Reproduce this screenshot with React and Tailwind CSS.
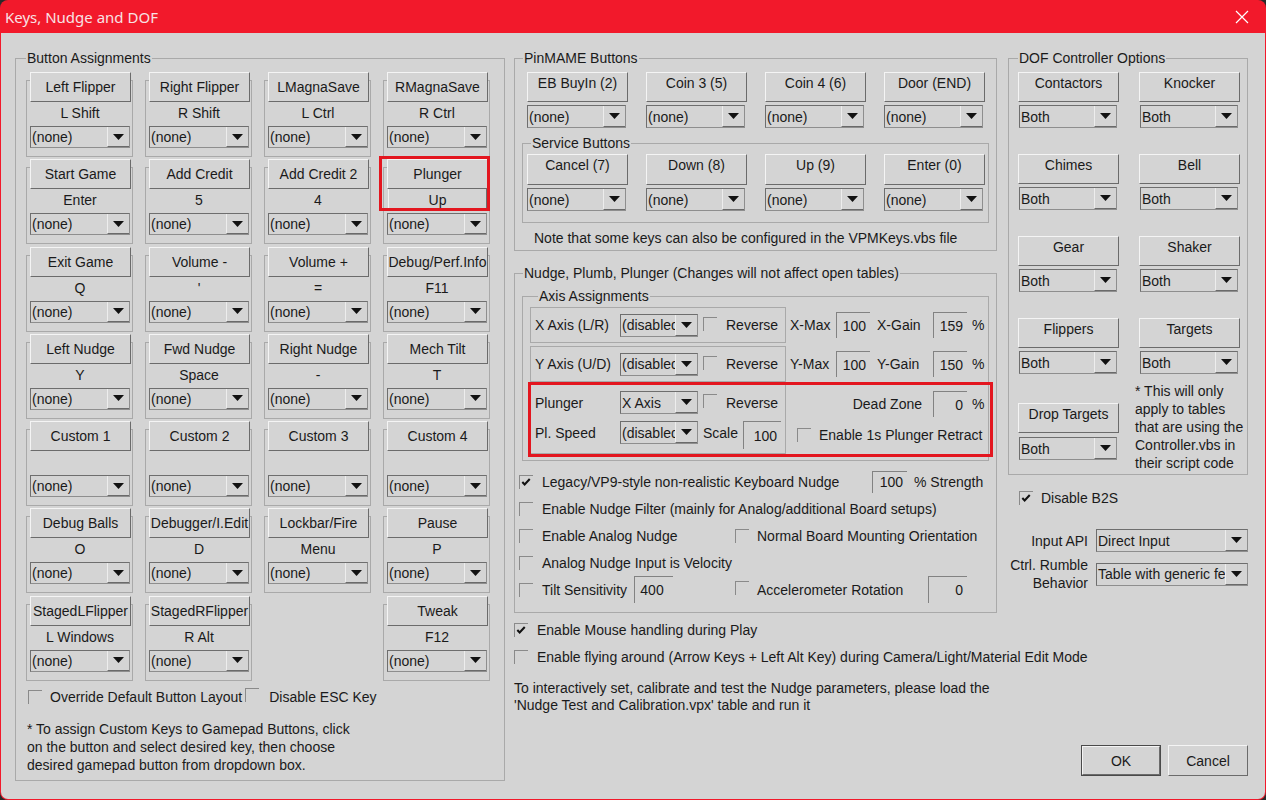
import React from 'react'

const keyRows = [
  [['Left Flipper', 'L Shift'], ['Right Flipper', 'R Shift'], ['LMagnaSave', 'L Ctrl'], ['RMagnaSave', 'R Ctrl']],
  [['Start Game', 'Enter'], ['Add Credit', '5'], ['Add Credit 2', '4'], ['Plunger', 'Up', true]],
  [['Exit Game', 'Q'], ['Volume -', "'"], ['Volume +', '='], ['Debug/Perf.Info', 'F11']],
  [['Left Nudge', 'Y'], ['Fwd Nudge', 'Space'], ['Right Nudge', '-'], ['Mech Tilt', 'T']],
  [['Custom 1', ''], ['Custom 2', ''], ['Custom 3', ''], ['Custom 4', '']],
  [['Debug Balls', 'O'], ['Debugger/I.Edit', 'D'], ['Lockbar/Fire', 'Menu'], ['Pause', 'P']],
  [['StagedLFlipper', 'L Windows'], ['StagedRFlipper', 'R Alt'], null, ['Tweak', 'F12']],
]

const pinButtons = ['EB BuyIn (2)', 'Coin 3 (5)', 'Coin 4 (6)', 'Door (END)']
const serviceButtons = ['Cancel (7)', 'Down (8)', 'Up (9)', 'Enter (0)']
const dofRows = [
  ['Contactors', 'Knocker'],
  ['Chimes', 'Bell'],
  ['Gear', 'Shaker'],
  ['Flippers', 'Targets'],
]

// raised push button
function Btn({ children, className = '', top = false }) {
  return (
    <div
      className={`flex ${top ? 'items-start pt-[2px]' : 'items-center'} [justify-content:safe_center] overflow-hidden whitespace-nowrap bg-[#d4d4d4] border border-t-[#f4f4f4] border-l-[#f4f4f4] border-r-[#6b6b6b] border-b-[#6b6b6b] ${className}`}
    >
      {children}
    </div>
  )
}

// drop down list with the little arrow button
function Combo({ value = '(none)', className = '' }) {
  return (
    <div className={`flex border border-[#8e8e8e] border-t-[#6e6e6e] border-l-[#6e6e6e] ${className}`}>
      <span className="flex-1 min-w-0 overflow-hidden whitespace-nowrap pl-[1px] flex items-center">{value}</span>
      <span className="w-[22px] shrink-0 flex items-center justify-center border-l border-l-[#ededed] border-b border-b-[#6a6a6a]">
        <svg width="11" height="6" viewBox="0 0 11 6">
          <path d="M0 0H11L5.5 6Z" fill="#111" />
        </svg>
      </span>
    </div>
  )
}

function Edit({ value, className = '' }) {
  return (
    <div className={`flex items-center justify-end pr-[4px] shrink-0 border-t border-l border-[#828282] ${className}`}>
      {value}
    </div>
  )
}

function Check({ on }) {
  return (
    <span className="relative inline-block w-[14px] h-[14px] shrink-0 border-t border-l border-[#8a8a8a]">
      {on && (
        <svg viewBox="0 0 14 14" className="absolute left-0 top-0 w-[13px] h-[13px]">
          <path d="M2.5 6.5L5 9.2L10.5 3.2" stroke="#111" strokeWidth="2.2" fill="none" />
        </svg>
      )}
    </span>
  )
}

function KeyCell({ cell }) {
  if (!cell) return <div />
  const [label, keyName, marked] = cell
  return (
    <div className="relative flex flex-col h-[85px]">
      <Btn className="relative z-10 ml-[4px] mr-[2px] h-[30px]">{label}</Btn>
      <div className="-mt-[22px] flex-1 border border-[#a9a9a9] pt-[21px] pl-[3px] pr-[2px]">
        <div
          className={`h-[22px] flex items-center justify-center ${
            marked ? 'ml-[1px] border-l border-l-[#f2f2f2] border-r border-b border-r-[#6b6b6b] border-b-[#6b6b6b]' : ''
          }`}
        >
          {keyName}
        </div>
        <Combo className="mt-[2px] h-[22px]" />
      </div>
      {marked && (
        <div className="absolute left-[-4px] right-[0px] top-[-3px] h-[55px] border-[3px] border-[#e3161f] z-20" />
      )}
    </div>
  )
}

function Legend({ children, className = '' }) {
  return <legend className={`px-[1px] leading-4 ${className}`}>{children}</legend>
}

function ButtonAssignments() {
  return (
    <fieldset className="w-[490px] border border-[#a9a9a9] pl-[10px] pr-[14px] pt-[6px] pb-[6px]">
      <Legend>Button Assignments</Legend>
      <div className="grid grid-cols-[repeat(4,107px)] gap-x-[12px] gap-y-[2.3px]">
        {keyRows.flat().map((cell, i) => (
          <KeyCell key={i} cell={cell} />
        ))}
      </div>
      <div className="mt-[8px] h-[16px] flex items-center ml-[2px] whitespace-nowrap">
        <Check />
        <span className="ml-[8px]">Override Default Button Layout</span>
        <span className="ml-[3px]">
          <Check />
        </span>
        <span className="ml-[10px]">Disable ESC Key</span>
      </div>
      <p className="mt-[15px] ml-[1px] leading-[18px]">
        * To assign Custom Keys to Gamepad Buttons, click
        <br />
        on the button and select desired key, then choose
        <br />
        desired gamepad button from dropdown box.
      </p>
    </fieldset>
  )
}

function PinMame() {
  return (
    <fieldset className="border border-[#a9a9a9] px-[7px] pt-[6px] pb-[4px]">
      <Legend className="ml-[1px]">PinMAME Buttons</Legend>
      <div className="ml-[5px] grid grid-cols-[repeat(4,101px)] gap-x-[18px]">
        {pinButtons.map((b) => (
          <div key={b}>
            <Btn top className="h-[30px]">{b}</Btn>
            <Combo className="mt-[3px] h-[23px] w-[99px]" />
          </div>
        ))}
      </div>
      <fieldset className="mt-[7px] border border-[#a9a9a9] pt-[3px] pb-[11px]">
        <Legend className="ml-[8px]">Service Buttons</Legend>
        <div className="ml-[4px] grid grid-cols-[repeat(4,101px)] gap-x-[18px]">
          {serviceButtons.map((b) => (
            <div key={b}>
              <Btn top className="h-[31px]">{b}</Btn>
              <Combo className="mt-[3px] h-[23px] w-[99px]" />
            </div>
          ))}
        </div>
      </fieldset>
      <p className="mt-[7px] ml-[12px] leading-4 whitespace-nowrap">
        Note that some keys can also be configured in the VPMKeys.vbs file
      </p>
    </fieldset>
  )
}

function AxisRow({ axis, max, gain, maxLabel, gainLabel, className = '' }) {
  return (
    <div className={`flex h-[36px] ${className}`}>
      <div className="w-[256px] border border-[#a9a9a9] flex items-center pl-[4px]">
        <span className="w-[85px] whitespace-nowrap">{axis}</span>
        <Combo value="(disabled)" className="w-[78px] h-[23px]" />
        <span className="ml-[5px]">
          <Check />
        </span>
        <span className="ml-[9px]">Reverse</span>
      </div>
      <div className="flex items-center pl-[4px] whitespace-nowrap">
        <span className="w-[46px]">{maxLabel}</span>
        <Edit value={max} className="w-[34px] h-[26px]" />
        <span className="ml-[7px] w-[56px]">{gainLabel}</span>
        <Edit value={gain} className="w-[34px] h-[26px]" />
        <span className="ml-[5px]">%</span>
      </div>
    </div>
  )
}

function CheckRow({ on, children, className = '' }) {
  return (
    <div className={`flex items-center h-[27px] whitespace-nowrap ${className}`}>
      <Check on={on} />
      {children}
    </div>
  )
}

function NudgeBox() {
  return (
    <fieldset className="mt-[14px] border border-[#a9a9a9] px-[7px] pt-[7px] pb-[9px]">
      <Legend className="ml-[1px] whitespace-nowrap">Nudge, Plumb, Plunger (Changes will not affect open tables)</Legend>
      <fieldset className="border border-[#a9a9a9] pl-[7px] pt-[3px] pb-[6px]">
        <Legend className="ml-[8px]">Axis Assignments</Legend>
        <AxisRow axis="X Axis (L/R)" maxLabel="X-Max" gainLabel="X-Gain" max="100" gain="159" />
        <AxisRow axis="Y Axis (U/D)" maxLabel="Y-Max" gainLabel="Y-Gain" max="100" gain="150" className="mt-[3px]" />
        <div className="relative flex h-[73px] -mt-[1px]">
          <div className="w-[256px] border border-[#a9a9a9] pl-[4px] pt-[9px]">
            <div className="flex items-center h-[23px]">
              <span className="w-[85px]">Plunger</span>
              <Combo value="X Axis" className="w-[78px] h-[23px]" />
              <span className="ml-[5px]">
                <Check />
              </span>
              <span className="ml-[9px]">Reverse</span>
            </div>
            <div className="flex items-start mt-[7px]">
              <span className="w-[85px] h-[23px] flex items-center">Pl. Speed</span>
              <Combo value="(disabled)" className="w-[78px] h-[23px]" />
              <span className="ml-[5px] h-[23px] flex items-center">Scale</span>
              <Edit value="100" className="ml-[5px] w-[38px] h-[28px]" />
            </div>
          </div>
          <div className="flex flex-col pt-[10px] whitespace-nowrap">
            <div className="flex items-center h-[26px]">
              <span className="w-[136px] text-right">Dead Zone</span>
              <Edit value="0" className="ml-[11px] w-[34px] h-[26px]" />
              <span className="ml-[5px]">%</span>
            </div>
            <div className="flex items-center mt-[10px] ml-[11px]">
              <Check />
              <span className="ml-[8px]">Enable 1s Plunger Retract</span>
            </div>
          </div>
          <div className="absolute left-[-2px] top-[1px] w-[465px] h-[75px] border-[3px] border-[#e3161f]" />
        </div>
      </fieldset>
      <div className="mt-[7px] -ml-[3px]">
        <CheckRow on>
          <span className="ml-[9px] w-[330px]">Legacy/VP9-style non-realistic Keyboard Nudge</span>
          <Edit value="100" className="w-[35px] h-[22px]" />
          <span className="ml-[7px]">% Strength</span>
        </CheckRow>
        <CheckRow>
          <span className="ml-[9px]">Enable Nudge Filter (mainly for Analog/additional Board setups)</span>
        </CheckRow>
        <CheckRow>
          <span className="ml-[9px] w-[193px]">Enable Analog Nudge</span>
          <Check />
          <span className="ml-[8px]">Normal Board Mounting Orientation</span>
        </CheckRow>
        <CheckRow>
          <span className="ml-[9px]">Analog Nudge Input is Velocity</span>
        </CheckRow>
        <CheckRow>
          <span className="ml-[9px] w-[92px]">Tilt Sensitivity</span>
          <Edit value="400" className="w-[39px] h-[27px] !justify-center" />
          <span className="ml-[62px]">
            <Check />
          </span>
          <span className="ml-[8px] w-[171px]">Accelerometer Rotation</span>
          <Edit value="0" className="w-[39px] h-[27px]" />
        </CheckRow>
      </div>
    </fieldset>
  )
}

function DofBox() {
  return (
    <fieldset className="border border-[#a9a9a9] pl-[9px] pt-[6px] pb-[2px]">
      <Legend>DOF Controller Options</Legend>
      <div className="grid grid-cols-[repeat(2,101px)] gap-x-[20px] gap-y-[26px]">
        {dofRows.flat().map((b) => (
          <div key={b}>
            <Btn top className="h-[30px]">{b}</Btn>
            <Combo value="Both" className="mt-[3px] ml-[1px] h-[23px] w-[98px]" />
          </div>
        ))}
      </div>
      <div className="mt-[8px] flex">
        <div className="w-[101px] pt-[21px]">
          <Btn top className="h-[30px]">Drop Targets</Btn>
          <Combo value="Both" className="mt-[4px] ml-[1px] h-[23px] w-[98px]" />
        </div>
        <p className="ml-[16px] leading-[18px] whitespace-nowrap">
          * This will only
          <br />
          apply to tables
          <br />
          that are using the
          <br />
          Controller.vbs in
          <br />
          their script code
        </p>
      </div>
    </fieldset>
  )
}

export default function App() {
  return (
    <div className="w-[1266px] h-[800px] bg-[#2a2a2a] text-[14px] leading-4 text-[#1a1a1a] font-['Liberation_Sans',Arial,sans-serif]">
      <div className="h-full flex flex-col rounded-[8px] bg-[#f2192b] overflow-hidden">
        <div className="h-[33px] shrink-0 flex items-center justify-between pl-[5px] pr-[17px] text-[#f8e2e4] font-['Noto_Sans',sans-serif] text-[15px]">
          <span>Keys, Nudge and DOF</span>
          <svg width="14" height="14" viewBox="0 0 14 14">
            <path d="M1 1L13 13M13 1L1 13" stroke="#fff" strokeWidth="1.2" />
          </svg>
        </div>
        <div className="flex-1 mx-[1px] mb-[1px] bg-[#d4d4d4] rounded-b-[7px] flex pl-[14px] pt-[17px]">
          <div>
            <ButtonAssignments />
          </div>

          <div className="ml-[9px] w-[483px] flex flex-col">
            <PinMame />
            <NudgeBox />
            <CheckRow on className="mt-[3px]">
              <span className="ml-[9px]">Enable Mouse handling during Play</span>
            </CheckRow>
            <CheckRow>
              <span className="ml-[9px]">
                Enable flying around (Arrow Keys + Left Alt Key) during Camera/Light/Material Edit Mode
              </span>
            </CheckRow>
            <p className="mt-[10px] leading-[17px] whitespace-nowrap">
              To interactively set, calibrate and test the Nudge parameters, please load the
              <br />
              'Nudge Test and Calibration.vpx' table and run it
            </p>
          </div>

          <div className="ml-[11px] w-[240px] flex flex-col">
            <DofBox />
            <div className="mt-[15px] ml-[11px] h-[16px] flex items-center">
              <Check on />
              <span className="ml-[8px]">Disable B2S</span>
            </div>
            <div className="mt-[23px] flex items-center">
              <span className="w-[80px] text-right">Input API</span>
              <Combo value="Direct Input" className="ml-[8px] w-[152px] h-[23px]" />
            </div>
            <div className="mt-[4px] flex items-center">
              <span className="w-[80px] text-right leading-[18px] whitespace-nowrap">
                Ctrl. Rumble
                <br />
                Behavior
              </span>
              <Combo value="Table with generic feedback" className="ml-[8px] w-[152px] h-[23px]" />
            </div>
            <div className="mt-auto mb-[23px] flex justify-end gap-[7px]">
              <div className="w-[80px] h-[31px] border border-[#4a4a4a] flex">
                <Btn className="flex-1">OK</Btn>
              </div>
              <Btn className="w-[80px] h-[31px]">Cancel</Btn>
            </div>
          </div>
        </div>
      </div>
    </div>
  )
}
